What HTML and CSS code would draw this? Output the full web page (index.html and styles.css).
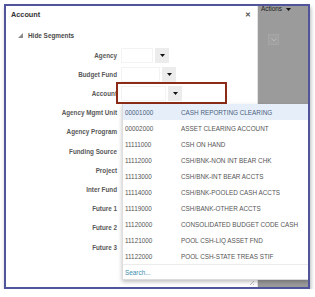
FILE: index.html
```html
<!DOCTYPE html>
<html lang="en">
<head>
<meta charset="utf-8">
<title>Account</title>
<link rel="stylesheet" href="styles.css">
</head>
<body>
<div class="frame">
  <section class="dialog">
    <header class="dlg-head">
      <span class="dlg-title">Account</span>
      <span class="dlg-close">&#x2715;</span>
    </header>
    <div class="toggle">
      <svg class="tri" width="5" height="5" viewBox="0 0 5 5"><polygon points="5,0 5,5 0,5" fill="#8a8a8a"/></svg>
      <span>Hide Segments</span>
    </div>
    <div class="form">
      <span class="lbl">Agency</span>
      <div class="field"><span class="inp w-a"></span><span class="btn"><svg width="5" height="3" viewBox="0 0 5 3"><polygon points="0,0 5,0 2.5,3" fill="#111"/></svg></span></div>
      <span class="lbl">Budget Fund</span>
      <div class="field"><span class="inp w-b"></span><span class="btn"><svg width="5" height="3" viewBox="0 0 5 3"><polygon points="0,0 5,0 2.5,3" fill="#111"/></svg></span></div>
      <span class="lbl">Account</span>
      <div class="field"><span class="inp w-c"></span><span class="btn"><svg width="5" height="3" viewBox="0 0 5 3"><polygon points="0,0 5,0 2.5,3" fill="#111"/></svg></span></div>
      <span class="lbl">Agency Mgmt Unit</span><span></span>
      <span class="lbl">Agency Program</span><span></span>
      <span class="lbl">Funding Source</span><span></span>
      <span class="lbl">Project</span><span></span>
      <span class="lbl">Inter Fund</span><span></span>
      <span class="lbl">Future 1</span><span></span>
      <span class="lbl">Future 2</span><span></span>
      <span class="lbl">Future 3</span><span></span>
    </div>
    <div class="dlg-foot"><span class="grip"></span></div>
  </section>
  <aside class="backdrop">
    <div class="actions">Actions <svg width="5" height="3" viewBox="0 0 5 3"><polygon points="0,0 5,0 2.5,3" fill="#111"/></svg></div>
    <div class="chev"><svg width="6" height="4" viewBox="0 0 6 4"><polyline points="0.5,0.5 3,3 5.5,0.5" fill="none" stroke="#bdbdbd" stroke-width="0.8"/></svg></div>
  </aside>

  <div class="highlight"></div>

  <div class="popup">
    <ul class="list">
      <li class="row sel"><span class="code">00001000</span><span class="desc">CASH REPORTING CLEARING</span></li>
      <li class="row"><span class="code">00002000</span><span class="desc">ASSET CLEARING ACCOUNT</span></li>
      <li class="row"><span class="code">11111000</span><span class="desc">CSH ON HAND</span></li>
      <li class="row"><span class="code">11112000</span><span class="desc">CSH/BNK-NON INT BEAR CHK</span></li>
      <li class="row"><span class="code">11113000</span><span class="desc">CSH/BNK-INT BEAR ACCTS</span></li>
      <li class="row"><span class="code">11114000</span><span class="desc">CSH/BNK-POOLED CASH ACCTS</span></li>
      <li class="row"><span class="code">11119000</span><span class="desc">CSH/BANK-OTHER ACCTS</span></li>
      <li class="row"><span class="code">11120000</span><span class="desc">CONSOLIDATED BUDGET CODE CASH</span></li>
      <li class="row"><span class="code">11121000</span><span class="desc">POOL CSH-LIQ ASSET FND</span></li>
      <li class="row"><span class="code">11122000</span><span class="desc">POOL CSH-STATE TREAS STIF</span></li>
    </ul>
    <div class="search">Search...</div>
  </div>
</div>
</body>
</html>
```

FILE: styles.css
```css
* { box-sizing: border-box; }

html, body {
  margin: 0;
  padding: 0;
  background: #ffffff;
}

body {
  font-family: "Liberation Sans", Arial, sans-serif;
  color: #444;
}

.frame {
  position: relative;
  margin: 4px 0 0 4px;
  width: 306px;
  height: 285px;
  border: 2px solid #50549a;
  box-shadow: 1px 3px 4px rgba(0, 0, 0, 0.28);
  display: flex;
  overflow: hidden;
  background: #fff;
}

/* ---------- dialog ---------- */
.dialog {
  width: 252px;
  flex: none;
  background: #fff;
  display: flex;
  flex-direction: column;
  border-right: 1px solid #e4e4e4;
}

.dlg-head {
  display: flex;
  justify-content: space-between;
  align-items: center;
  height: 17px;
  padding: 0 6px 0 5px;
}

.dlg-title {
  font-size: 7.3px;
  font-weight: bold;
  line-height: 9px;
  color: #333;
}

.dlg-close {
  font-size: 7px;
  font-weight: bold;
  line-height: 9px;
  color: #555;
}

.toggle {
  display: flex;
  align-items: center;
  gap: 5px;
  margin-top: 7.5px;
  padding-left: 12px;
  height: 9px;
  font-size: 6.4px;
  font-weight: bold;
  line-height: 9px;
  color: #4a4a4a;
}

.toggle .tri { flex: none; margin-top: 1px; }

.form {
  display: grid;
  grid-template-columns: 111px auto;
  column-gap: 4px;
  grid-auto-rows: 19.2px;
  align-items: center;
  margin-top: 6.1px;
}

.lbl {
  text-align: right;
  font-size: 6.3px;
  font-weight: bold;
  color: #585858;
  white-space: nowrap;
  line-height: 9px;
}

.field {
  display: flex;
  align-items: center;
  gap: 2px;
  height: 15px;
}

.inp {
  height: 15px;
  border: 1px solid #f3f3f3;
  background: #fff;
}
.w-a { width: 32px; }
.w-b { width: 39px; }
.w-c { width: 45px; }

.btn {
  width: 14px;
  height: 15px;
  background: #ececec;
  display: flex;
  align-items: center;
  justify-content: center;
}
.btn svg { display: block; }

.dlg-foot {
  margin-top: auto;
  height: 9px;
  position: relative;
}

.grip {
  position: absolute;
  right: 3px;
  bottom: 2px;
  width: 5px;
  height: 5px;
  background: linear-gradient(135deg, transparent 55%, #bbb 55%, #bbb 65%, transparent 65%, transparent 80%, #bbb 80%);
}

/* ---------- backdrop ---------- */
.backdrop {
  flex: 1;
  background: #9b9b9b;
  padding: 0 0 0 3px;
}

.actions {
  font-size: 6.4px;
  line-height: 6px;
  color: #222;
  display: flex;
  align-items: center;
  gap: 4px;
}

.chev {
  margin: 22px 0 0 7px;
  width: 11px;
  height: 11px;
  background: #a0a0a0;
  border: 1px solid #a6a6a6;
  display: flex;
  align-items: center;
  justify-content: center;
}

/* ---------- overlays ---------- */
.highlight {
  position: absolute;
  left: 110px;
  top: 76px;
  width: 111px;
  height: 22px;
  border: 2.5px solid #8a2c18;
}

.popup {
  position: absolute;
  left: 116px;
  top: 98px;
  width: 187px;
  height: 176px;
  background: #fff;
  border-left: 1px solid #dcdcdc;
  border-bottom: 1px solid #dcdcdc;
  box-shadow: 0 2px 4px rgba(0, 0, 0, 0.25);
}

.list {
  list-style: none;
  margin: 0;
  padding: 0;
  border-bottom: 1px solid #ececec;
}

.row {
  display: flex;
  align-items: center;
  height: 16px;
  padding-left: 2px;
  font-size: 6.35px;
  color: #555;
  white-space: nowrap;
}

.row.sel { background: #e6eef9; color: #4a5f80; }

.code { width: 56px; flex: none; }

.search {
  height: 15px;
  line-height: 15px;
  padding-left: 2px;
  font-size: 6.4px;
  color: #3c8fae;
}
```
